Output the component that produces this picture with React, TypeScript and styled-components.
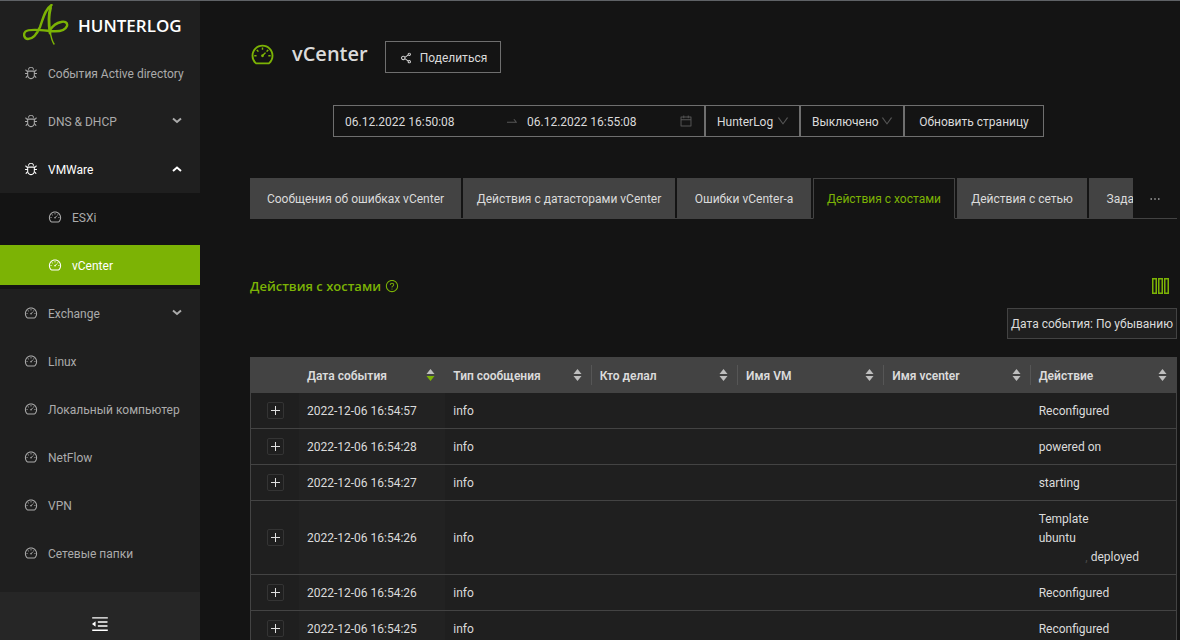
import React from "react";
import styled, { createGlobalStyle, css } from "styled-components";
import {
  AiOutlineBug,
  AiOutlineCalendar,
  AiOutlineDashboard,
  AiOutlineDown,
  AiOutlineEllipsis,
  AiOutlineMenuFold,
  AiOutlineQuestionCircle,
  AiOutlineShareAlt,
  AiOutlineSwapRight,
} from "react-icons/ai";

const GlobalStyle = createGlobalStyle`
  * { box-sizing: border-box; }
  body {
    margin: 0;
    background: #141414;
    color: #dbdbdb;
    font: 12px/19px Roboto, "Open Sans", sans-serif;
  }
  button, input, select { font: inherit; color: inherit; margin: 0; }
  button, select { cursor: pointer; }
  svg { display: block; flex: none; }
`;

const Page = styled.div`
  display: flex;
  height: 100vh;
  border-top: 1px solid #5f6266;
`;

const Sidebar = styled.aside`
  display: flex;
  flex-direction: column;
  flex: none;
  width: 200px;
  background: #1f1f1f;
`;

const Brand = styled.a`
  display: flex;
  align-items: center;
  gap: 9px;
  height: 48px;
  padding-left: 23px;
  color: #fff;
  font-family: "Open Sans", sans-serif;
  font-size: 17px;
  font-weight: 600;
  text-decoration: none;
`;

const Menu = styled.nav`
  flex: 1;
  min-height: 0;
  overflow: hidden;
`;

const SubMenu = styled.div`
  background: #141414;
  overflow: hidden;
`;

const MenuItem = styled.a<{ $nested?: boolean; $active?: boolean; $open?: boolean }>`
  display: flex;
  align-items: center;
  gap: 10px;
  height: 40px;
  margin: 4px 0 8px;
  padding: 0 18px 0 ${(p) => (p.$nested ? 48 : 24)}px;
  background: ${(p) => (p.$active ? "#7cb305" : "transparent")};
  color: ${(p) => (p.$active || p.$open ? "#fff" : "#ababab")};
  text-decoration: none;
  white-space: nowrap;

  & + & { margin-top: 0; }
  ${SubMenu} &:last-child { margin-bottom: 4px; }
  span { flex: 1; min-width: 0; padding-top: 2px; }
`;

const MenuGroup = styled.div`
  overflow: hidden;
  ${MenuItem} { margin: 4px 0; }
`;

const Collapse = styled.button`
  display: flex;
  align-items: center;
  justify-content: center;
  flex: 0 0 48px;
  padding: 16px 0 0;
  border: 0;
  background: #262626;
  color: #fff;
`;

const Main = styled.main`
  flex: 1;
  min-width: 0;
  padding: 40px 3px 0 50px;
  overflow: auto;
  scrollbar-width: none;
`;

const Heading = styled.header`
  display: flex;
  align-items: center;
  gap: 17px;

  > svg {
    margin-bottom: 6px;
    color: #7cb305;
  }
  h1 {
    margin: 0 0 6px;
    font-family: "Open Sans", sans-serif;
    font-size: 20px;
    line-height: 26px;
    font-weight: 600;
  }
`;

const controlBox = css`
  height: 32px;
  border: 1px solid #6f6f6f;
  background: transparent;
`;

const OutlineButton = styled.button`
  ${controlBox}
  display: flex;
  align-items: center;
  justify-content: center;
  gap: 7px;
  padding: 2px 13px 0;
  white-space: nowrap;
`;

const Filters = styled.form`
  display: flex;
  justify-content: center;
  margin-top: 32px;
  padding-right: 50px;

  ${OutlineButton} { flex: 0 0 140px; }
`;

const DateRange = styled.div`
  ${controlBox}
  display: flex;
  align-items: center;
  flex: 0 1 372px;
  min-width: 0;
  padding: 0 11px;
  svg { color: #555; }
`;

const DateInput = styled.input`
  flex: 1;
  min-width: 0;
  width: 0;
  padding: 2px 0 0;
  border: 0;
  outline: 0;
  background: transparent;
  &:first-child + svg { margin: 0 8px; }
`;

const SelectBox = styled.label<{ $width: number }>`
  ${controlBox}
  display: grid;
  align-items: center;
  flex: 0 0 ${(p) => p.$width}px;

  > * { grid-area: 1 / 1; }
  svg {
    justify-self: end;
    margin-right: 9px;
    color: #555;
    pointer-events: none;
  }
  select {
    width: 100%;
    height: 30px;
    padding: 2px 20px 0 11px;
    border: 0;
    appearance: none;
    background: transparent;
  }
`;

const TabBar = styled.div`
  display: flex;
  margin-top: 41px;
  height: 41px;
  box-shadow: inset 0 -1px #434343;
`;

const TabList = styled.div`
  display: flex;
  flex: 1;
  gap: 2px;
  min-width: 0;
  overflow: hidden;
`;

const Tab = styled.button<{ $width: number; $active?: boolean }>`
  flex: 0 0 ${(p) => p.$width}px;
  padding: 2px 0 0;
  border: 1px solid #434343;
  border-bottom-color: ${(p) => (p.$active ? "#141414" : "#434343")};
  background: ${(p) => (p.$active ? "#141414" : "#434343")};
  color: ${(p) => (p.$active ? "#7cb305" : "#dbdbdb")};
  white-space: nowrap;
`;

const MoreTabs = styled.button`
  display: flex;
  align-items: center;
  justify-content: center;
  flex: 0 0 44px;
  border: 0;
  background: transparent;
`;

const SectionHead = styled.div`
  display: flex;
  align-items: center;
  gap: 4px;
  margin-top: 57px;
  color: #7cb305;

  h2 {
    margin: 0;
    font-family: "Open Sans", sans-serif;
    font-size: 13px;
    line-height: 20px;
    font-weight: 600;
  }
`;

const IconButton = styled.button`
  margin-left: auto;
  margin-right: 8px;
  padding: 0;
  border: 0;
  background: transparent;
`;

const SortRow = styled.div`
  display: flex;
  justify-content: flex-end;
  margin: 12px 0 18px;
`;

const SortButton = styled.button`
  height: 31px;
  padding: 2px 3px 0;
  border: 1px solid #434343;
  background: #1f1f1f;
`;

const Table = styled.table`
  width: 100%;
  table-layout: fixed;
  border-collapse: separate;
  border-spacing: 0;
  background: #1f1f1f;
`;

const HeadCell = styled.th<{ $divider?: boolean }>`
  height: 36px;
  padding: 0;
  background: #434343;
  text-align: left;
  font-weight: 600;

  > div {
    display: flex;
    align-items: center;
    justify-content: space-between;
    height: 20px;
    padding: 0 8px;
    border-right: 1px solid ${(p) => (p.$divider ? "#565656" : "transparent")};
  }
  span { padding-top: 2px; }
  &:first-child { width: 49px; }
`;

const SortToggle = styled.button`
  padding: 0;
  border: 0;
  background: transparent;
`;

const Cell = styled.td<{ $sorted?: boolean }>`
  padding: 9px 8px 7px;
  border-bottom: 1px solid #434343;
  background: ${(p) => (p.$sorted ? "#222" : "transparent")};

  &:first-child { border-left: 1px solid #434343; padding: 0; }
  &:last-child { border-right: 1px solid #434343; }
`;

const Expand = styled.button`
  display: grid;
  place-items: center;
  width: 17px;
  height: 17px;
  margin: 0 auto;
  padding: 0;
  border: 1px solid #343434;
  border-radius: 2px;
  background: transparent;
`;

const Indent = styled.span`
  display: inline-block;
  width: 52px;
  padding-right: 3px;
  text-align: right;
  color: #4a4a4a;
`;

const Logo = () => (
  <svg width="46" height="42" viewBox="0 0 46 42" fill="none" stroke="#7cb305" strokeLinecap="round" strokeLinejoin="round">
    <path d="M28.5 1C22 5 20 15 17 23C14 30 10 35 5 35C1 35 0 30 2.500 27.500C5 25 14 25.500 25 26.700C34 28 42 27 44 22C45 18 41 17 38 18C33 19 29 23 27 26" strokeWidth="2.400" />
    <path d="M28.500 1C26 8 25.500 18 27 27C27.800 32 29 37 31 40" strokeWidth="1.500" />
    <path d="M27.500 4C25.500 11 25.500 19 27 29" strokeWidth="2.800" />
  </svg>
);

const Caret = ({ up }: { up?: boolean }) => (
  <svg width="10" height="8" viewBox="0 0 10 8" fill="none" stroke="currentColor" strokeWidth="2">
    <path d={up ? "M1 6L5 2.5L9 6" : "M1 1.5L5 5L9 1.5"} />
  </svg>
);

const ColumnsIcon = () => (
  <svg width="17" height="16" viewBox="0 0 17 16" fill="none" stroke="#7cb305" strokeWidth="1.5">
    <path d="M.75 .75h3.5v14.5h-3.5zM6.75 .75h3.5v14.5h-3.5zM12.75 .75h3.5v14.5h-3.5z" />
  </svg>
);

const Sorter = ({ descending }: { descending?: boolean }) => (
  <svg width="11" height="14" viewBox="0 0 11 14" fill="#bfbfbf">
    <path d="M5.5 1L9.5 6H1.5z" />
    <path d="M5.5 13L9.5 8H1.5z" fill={descending ? "#7cb305" : "#bfbfbf"} />
  </svg>
);

const Plus = () => (
  <svg width="9" height="9" viewBox="0 0 9 9" stroke="#e0e0e0">
    <path d="M4.5 0v9M0 4.5h9" />
  </svg>
);

const tabs = [
  { name: "Сообщения об ошибках vCenter", width: 211 },
  { name: "Действия с датасторами vCenter", width: 212 },
  { name: "Ошибки vCenter-а", width: 134 },
  { name: "Действия с хостами", width: 142, active: true },
  { name: "Действия с сетью", width: 130 },
  { name: "Задачи", width: 76 },
];
const columns = ["Дата события", "Тип сообщения", "Кто делал", "Имя VM", "Имя vcenter", "Действие"];
const deployed = (
  <>
    Template
    <br />
    ubuntu
    <br />
    <Indent>,</Indent>deployed
  </>
);
const rows: [string, React.ReactNode][] = [
  ["2022-12-06 16:54:57", "Reconfigured"],
  ["2022-12-06 16:54:28", "powered on"],
  ["2022-12-06 16:54:27", "starting"],
  ["2022-12-06 16:54:26", deployed],
  ["2022-12-06 16:54:26", "Reconfigured"],
  ["2022-12-06 16:54:25", "Reconfigured"],
];

export default function App() {
  return (
    <>
      <GlobalStyle />
      <Page>
        <Sidebar>
          <Brand href="#home">
            <Logo />
            HUNTERLOG
          </Brand>
          <Menu>
            <MenuGroup>
              <MenuItem href="#ad"><AiOutlineBug size={14} /><span>События Active directory</span></MenuItem>
            </MenuGroup>
            <MenuGroup>
              <MenuItem href="#dns"><AiOutlineBug size={14} /><span>DNS &amp; DHCP</span><Caret /></MenuItem>
            </MenuGroup>
            <MenuGroup>
              <MenuItem href="#vmware" $open><AiOutlineBug size={14} /><span>VMWare</span><Caret up /></MenuItem>
            </MenuGroup>
            <SubMenu>
              <MenuItem href="#esxi" $nested><AiOutlineDashboard size={14} /><span>ESXi</span></MenuItem>
              <MenuItem href="#vcenter" $nested $active><AiOutlineDashboard size={14} /><span>vCenter</span></MenuItem>
            </SubMenu>
            {["Exchange", "Linux", "Локальный компьютер", "NetFlow", "VPN", "Сетевые папки"].map((name) => (
              <MenuGroup key={name}>
                <MenuItem href="#section">
                  <AiOutlineDashboard size={14} />
                  <span>{name}</span>
                  {name === "Exchange" && <Caret />}
                </MenuItem>
              </MenuGroup>
            ))}
          </Menu>
          <Collapse aria-label="Свернуть меню"><AiOutlineMenuFold size={20} /></Collapse>
        </Sidebar>

        <Main>
          <Heading>
            <AiOutlineDashboard size={25} />
            <h1>vCenter</h1>
            <OutlineButton><AiOutlineShareAlt size={14} />Поделиться</OutlineButton>
          </Heading>

          <Filters onSubmit={(e) => e.preventDefault()}>
            <DateRange>
              <DateInput aria-label="Начало периода" defaultValue="06.12.2022 16:50:08" />
              <AiOutlineSwapRight size={14} />
              <DateInput aria-label="Конец периода" defaultValue="06.12.2022 16:55:08" />
              <AiOutlineCalendar size={14} />
            </DateRange>
            <SelectBox $width={95}>
              <select aria-label="Источник"><option>HunterLog</option></select>
              <AiOutlineDown size={14} />
            </SelectBox>
            <SelectBox $width={104}>
              <select aria-label="Автообновление"><option>Выключено</option></select>
              <AiOutlineDown size={14} />
            </SelectBox>
            <OutlineButton type="submit">Обновить страницу</OutlineButton>
          </Filters>

          <TabBar>
            <TabList role="tablist">
              {tabs.map(({ name, width, active }) => (
                <Tab key={name} role="tab" $width={width} $active={active} aria-selected={!!active}>{name}</Tab>
              ))}
            </TabList>
            <MoreTabs aria-label="Ещё вкладки"><AiOutlineEllipsis size={14} /></MoreTabs>
          </TabBar>

          <SectionHead>
            <h2>Действия с хостами</h2>
            <AiOutlineQuestionCircle size={14} />
            <IconButton aria-label="Столбцы"><ColumnsIcon /></IconButton>
          </SectionHead>
          <SortRow><SortButton>Дата события: По убыванию</SortButton></SortRow>

          <Table>
            <thead>
              <tr>
                <HeadCell />
                {columns.map((name, i) => (
                  <HeadCell key={name} $divider={i > 0 && i < 5}>
                    <div>
                      <span>{name}</span>
                      <SortToggle aria-label={"Сортировать: " + name}><Sorter descending={i === 0} /></SortToggle>
                    </div>
                  </HeadCell>
                ))}
              </tr>
            </thead>
            <tbody>
              {rows.map(([date, action], i) => (
                <tr key={i}>
                  <Cell><Expand aria-label="Развернуть"><Plus /></Expand></Cell>
                  <Cell $sorted>{date}</Cell>
                  <Cell>info</Cell>
                  <Cell />
                  <Cell />
                  <Cell />
                  <Cell>{action}</Cell>
                </tr>
              ))}
            </tbody>
          </Table>
        </Main>
      </Page>
    </>
  );
}
